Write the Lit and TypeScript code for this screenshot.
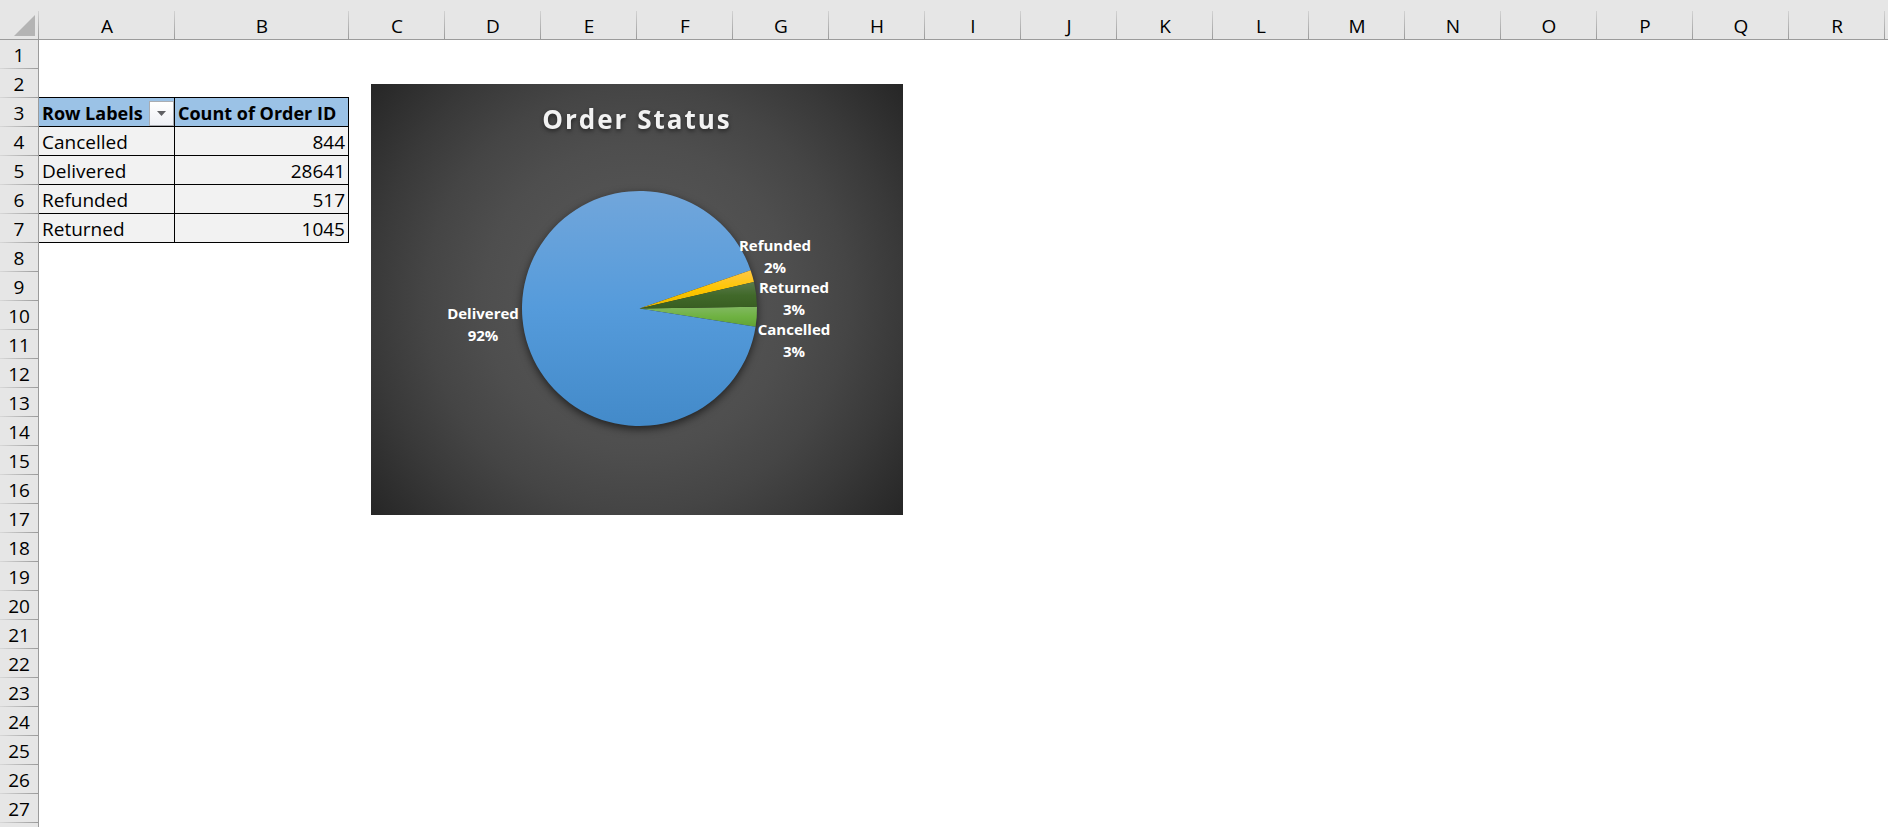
import { LitElement, html, svg, css, nothing } from "lit";
import { customElement, property } from "lit/decorators.js";
import { classMap } from "lit/directives/class-map.js";

interface Row {
  label: string;
  count: number;
}

const ROWS: Row[] = [
  { label: "Cancelled", count: 844 },
  { label: "Delivered", count: 28641 },
  { label: "Refunded", count: 517 },
  { label: "Returned", count: 1045 },
];

const COLUMNS = "ABCDEFGHIJKLMNOPQR".split("");
const ROW_COUNT = 27;
const PIVOT_ROW = 3;

@customElement("order-status-chart")
export class OrderStatusChart extends LitElement {
  @property({ attribute: false }) rows: Row[] = [];

  static styles = css`
    :host {
      display: block;
    }
    .chart {
      display: block;
      width: 100%;
      height: auto;
      font-family: "Open Sans", "Noto Sans", sans-serif;
      font-weight: 700;
      text-anchor: middle;
    }
    .title {
      font-size: 26px;
      letter-spacing: 2px;
      fill: #f2f2f2;
      filter: drop-shadow(0 2px 2px rgba(0, 0, 0, 0.5));
    }
    .label {
      font-size: 15px;
      fill: #fff;
    }
    .pie {
      filter: drop-shadow(0 3px 4px rgba(0, 0, 0, 0.6));
    }
  `;

  private readonly cx = 268.5;
  private readonly cy = 224.5;
  private readonly r = 117.5;

  /* Vertical gradient stops per slice */
  private readonly fills: Record<string, string[]> = {
    Cancelled: ["#81b861", "#6fb242", "#61a235"],
    Delivered: ["#71a6db", "#559bdb", "#438ac9"],
    Refunded: ["#ffc746", "#ffc600", "#e5b600"],
    Returned: ["#5a7a4b", "#41692a", "#385e21"],
  };

  private readonly labels: Record<string, [number, number]> = {
    Cancelled: [423, 251],
    Delivered: [112, 235],
    Refunded: [404, 167],
    Returned: [423, 209],
  };

  private point(deg: number) {
    const a = (deg * Math.PI) / 180;
    return `${(this.cx + this.r * Math.cos(a)).toFixed(2)} ${(this.cy + this.r * Math.sin(a)).toFixed(2)}`;
  }

  render() {
    const total = this.rows.reduce((sum, row) => sum + row.count, 0);
    let angle = -0.9;
    const slices = this.rows.map((row) => {
      const start = angle;
      angle += (row.count / total) * 360;
      const large = angle - start > 180 ? 1 : 0;
      return {
        label: row.label,
        percent: Math.round((row.count / total) * 100),
        d: `M${this.cx} ${this.cy}L${this.point(start)}A${this.r} ${this.r} 0 ${large} 1 ${this.point(angle)}Z`,
      };
    });

    return html`<svg class="chart" viewBox="0 0 532 431" aria-label="Order Status">
      <defs>
        <radialGradient id="backdrop" gradientUnits="userSpaceOnUse" cx="266" cy="215" r="342">
          <stop offset="0" stop-color="#595959" />
          <stop offset="0.25" stop-color="#545454" />
          <stop offset="0.45" stop-color="#4e4e4e" />
          <stop offset="0.62" stop-color="#454545" />
          <stop offset="0.78" stop-color="#393939" />
          <stop offset="1" stop-color="#262626" />
        </radialGradient>
        ${slices.map(
          (s) => svg`<linearGradient id=${"fill-" + s.label} x1="0" y1="0" x2="0" y2="1">
            <stop offset="0" stop-color=${this.fills[s.label][0]} />
            <stop offset="0.5" stop-color=${this.fills[s.label][1]} />
            <stop offset="1" stop-color=${this.fills[s.label][2]} />
          </linearGradient>`
        )}
      </defs>
      <rect width="532" height="431" fill="url(#backdrop)" />
      <text class="title" x="266" y="45">Order Status</text>
      <g class="pie">
        ${slices.map((s) => svg`<path d=${s.d} fill=${`url(#fill-${s.label})`} />`)}
      </g>
      ${slices.map((s) => {
        const [x, y] = this.labels[s.label];
        return svg`<text class="label" x=${x} y=${y}>${s.label}</text>
          <text class="label" x=${x} y=${y + 22}>${s.percent}%</text>`;
      })}
    </svg>`;
  }
}

@customElement("app-root")
export class AppRoot extends LitElement {
  static styles = css`
    :host {
      display: block;
      position: relative;
      height: 100vh;
      overflow: hidden;
      background: #fff;
      color: #000;
      font: 400 19px/28px "Open Sans", "Noto Sans", sans-serif;
    }
    .sheet {
      width: 0;
      table-layout: fixed;
      border-collapse: separate;
      border-spacing: 0;
    }
    .col-head {
      width: 39px;
    }
    .col-a {
      width: 136px;
    }
    .col-b {
      width: 174px;
    }
    .col {
      width: 96px;
    }
    th,
    td {
      box-sizing: border-box;
      height: 29px;
      padding: 0;
      font-weight: 400;
      white-space: nowrap;
    }
    .corner,
    .letter {
      height: 40px;
      border-bottom: 1px solid #9b9b9b;
      text-align: center;
      vertical-align: bottom;
      background: linear-gradient(#d2d2d2, #9b9b9b) right bottom / 1px 28px no-repeat #e6e6e6;
    }
    .letter {
      line-height: 25px;
    }
    .corner {
      padding: 0 4px 3px 0;
    }
    .triangle {
      display: block;
      margin-left: auto;
    }
    .number {
      border-right: 1px solid #9b9b9b;
      text-align: center;
      background: linear-gradient(90deg, #d8d8d8, #9b9b9b) left bottom / 100% 1px no-repeat #e6e6e6;
    }
    .above {
      border-bottom: 1px solid #000;
    }
    .cell {
      padding: 2px 3px 0;
      border: solid #000;
      border-width: 0 1px 1px 0;
      background: #f2f2f2;
      line-height: 26px;
      text-align: left;
    }
    .value {
      text-align: right;
    }
    .heading {
      padding-right: 0;
      background: #9bc2e6;
      font-size: 18px;
      font-weight: 700;
    }
    .heading-row {
      display: flex;
      align-items: center;
      justify-content: space-between;
      height: 26px;
    }
    .filter {
      display: flex;
      align-items: center;
      justify-content: center;
      box-sizing: border-box;
      width: 25px;
      height: 25px;
      padding: 0;
      border: 1px solid #a9adb3;
      background: linear-gradient(#fff, #eef0f5);
    }
    .chart {
      position: absolute;
      left: 371px;
      top: 84px;
      width: 532px;
    }
  `;

  private renderCell(row: number, column: string) {
    const isLabel = column === "A";
    if (!isLabel && column !== "B") return html`<td></td>`;
    if (row === PIVOT_ROW) {
      return html`<th class="cell heading" scope="col">
        <div class="heading-row">
          ${isLabel ? "Row Labels" : "Count of Order ID"}
          ${isLabel
            ? html`<button class="filter" type="button" aria-label="Filter row labels">
                <svg width="9" height="5" viewBox="0 0 9 5" aria-hidden="true">
                  <path d="M0 0h9L4.500 5z" fill="#5f6064" />
                </svg>
              </button>`
            : nothing}
        </div>
      </th>`;
    }
    const data = row > PIVOT_ROW ? ROWS[row - PIVOT_ROW - 1] : undefined;
    if (!data) return html`<td class=${classMap({ above: row === PIVOT_ROW - 1 })}></td>`;
    return isLabel
      ? html`<th class="cell" scope="row">${data.label}</th>`
      : html`<td class="cell value">${data.count}</td>`;
  }

  render() {
    const numbers = Array.from({ length: ROW_COUNT }, (_, i) => i + 1);
    return html`
      <table class="sheet">
        <colgroup>
          <col class="col-head" />
          ${COLUMNS.map((c) => html`<col class=${c === "A" ? "col-a" : c === "B" ? "col-b" : "col"} />`)}
          <col class="col" />
        </colgroup>
        <thead>
          <tr>
            <td class="corner">
              <svg class="triangle" width="21" height="21" viewBox="0 0 21 21" aria-hidden="true">
                <path d="M21 0v21H0z" fill="#b4b4b4" />
              </svg>
            </td>
            ${COLUMNS.map((c) => html`<th class="letter" scope="col">${c}</th>`)}
            <td class="letter"></td>
          </tr>
        </thead>
        <tbody>
          ${numbers.map(
            (n) => html`<tr>
              <th class="number" scope="row">${n}</th>
              ${COLUMNS.map((c) => this.renderCell(n, c))}
            </tr>`
          )}
          <tr>
            <td class="number"></td>
          </tr>
        </tbody>
      </table>
      <order-status-chart class="chart" .rows=${ROWS}></order-status-chart>
    `;
  }
}
